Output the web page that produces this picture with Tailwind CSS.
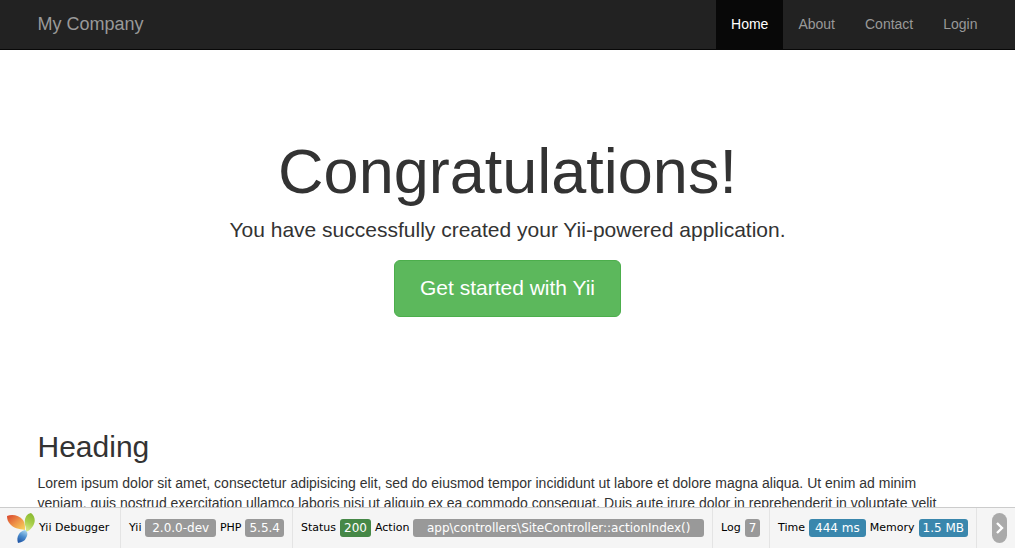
<!DOCTYPE html>
<html lang="en">
<head>
<meta charset="utf-8">
<meta name="viewport" content="width=device-width, initial-scale=1">
<title>My Company</title>
<script src="https://cdn.jsdelivr.net/npm/@tailwindcss/browser@4"></script>
</head>
<body class="bg-white font-['Liberation_Sans',Arial,sans-serif] text-sm leading-5 text-[#333]">
<nav class="border-b border-[#080808] bg-[#222]">
  <div class="mx-auto flex max-w-[970px] items-start justify-between pl-[15px]">
    <a href="#" class="pt-[14px] text-lg leading-5 text-[#999]">My Company</a>
    <ul class="flex leading-5 text-[#999]">
      <li><a href="#" aria-current="page" class="block bg-[#080808] px-[15px] pt-[14px] pb-[15px] text-white">Home</a></li>
      <li><a href="#" class="block px-[15px] pt-[14px] pb-[15px]">About</a></li>
      <li><a href="#" class="block px-[15px] pt-[14px] pb-[15px]">Contact</a></li>
      <li><a href="#" class="block px-[15px] pt-[14px] pb-[15px]">Login</a></li>
    </ul>
  </div>
</nav>
<main class="mx-auto max-w-[970px] px-[15px]">
  <header class="flex flex-col items-center pt-[90px] text-center">
    <h1 class="text-[63px] leading-[63px]">Congratulations!</h1>
    <p class="mt-3 text-[21px] leading-[30px]">You have successfully created your Yii-powered application.</p>
    <a href="#" class="mt-[15px] rounded-md border border-[#4cae4c] bg-[#5cb85c] px-[25px] pt-3 pb-[14px] text-[21px] leading-[29px] text-white">Get started with Yii</a>
  </header>
  <section class="mt-[113px] pr-5">
    <h2 class="text-[30px] leading-[33px]">Heading</h2>
    <p class="mt-[10px]">Lorem ipsum dolor sit amet, consectetur adipisicing elit, sed do eiusmod tempor incididunt ut labore et dolore magna aliqua. Ut enim ad minim veniam, quis nostrud exercitation ullamco laboris nisi ut aliquip ex ea commodo consequat. Duis aute irure dolor in reprehenderit in voluptate velit</p>
  </section>
</main>
<footer class="fixed inset-x-0 bottom-0 flex h-[41px] items-stretch border-t border-[#ccc] bg-[#f5f5f5] font-[Verdana,'DejaVu_Sans',sans-serif] text-[11px] leading-[18px] whitespace-nowrap text-black">
  <a href="#" class="flex min-w-[121px] items-center gap-1 border-r border-[#e4e4e4] pl-[7px]">
    <svg class="h-[30px] w-7" viewBox="0 0 28 30" aria-hidden="true">
      <defs>
        <linearGradient id="o" x1="0" y1="0" x2="1" y2="1"><stop stop-color="#d8432c"/><stop offset=".5" stop-color="#ee9248"/><stop offset="1" stop-color="#f8d85c"/></linearGradient>
        <linearGradient id="g" x1=".6" y1="0" x2=".3" y2="1"><stop stop-color="#8ab92f"/><stop offset=".5" stop-color="#a8cf4b"/><stop offset="1" stop-color="#dceb92"/></linearGradient>
        <linearGradient id="b" x1=".7" y1="0" x2=".3" y2="1"><stop stop-color="#a5d4ee"/><stop offset=".5" stop-color="#4a8bcc"/><stop offset="1" stop-color="#1f55a5"/></linearGradient>
      </defs>
      <path fill="url(#o)" d="M0 3C5 1 12 2 16 7c2 3 2 6 2 10C12 16 6 15 3 11 1 9 0 6 0 3Z"/>
      <path fill="url(#g)" d="M24 0c4 3 5 8 2 13-2 3-4 5-7 6 0-3 0-5-1-7-1-6 1-11 6-12Z"/>
      <path fill="url(#b)" d="M18 17c3 2 3 5 1 8-1 3-4 4-8 5-1-3-1-6 1-9 1-2 3-3 6-4Z"/>
    </svg>
    <span>Yii Debugger</span>
  </a>
  <a href="#" class="flex min-w-[172px] items-center gap-1 border-r border-[#e4e4e4] px-2">
    <span>Yii</span><span class="grow rounded-[3px] bg-[#999] px-1 text-center text-xs leading-[18px] text-white">2.0.0-dev</span>
    <span>PHP</span><span class="rounded-[3px] bg-[#999] px-1 text-xs leading-[18px] text-white">5.5.4</span>
  </a>
  <a href="#" class="flex min-w-[420px] items-center gap-1 border-r border-[#e4e4e4] px-2">
    <span>Status</span><span class="rounded-[3px] bg-[#468847] px-1 text-xs leading-[18px] text-white">200</span>
    <span>Action</span><span class="grow rounded-[3px] bg-[#999] px-1 text-center text-xs leading-[18px] text-white">app\controllers\SiteController::actionIndex()</span>
  </a>
  <a href="#" class="flex min-w-[57px] items-center gap-1 border-r border-[#e4e4e4] px-2">
    <span>Log</span><span class="rounded-[3px] bg-[#999] px-1 text-xs leading-[18px] text-white">7</span>
  </a>
  <a href="#" class="flex min-w-[207px] items-center gap-1 border-r border-[#e4e4e4] px-2">
    <span>Time</span><span class="grow rounded-[3px] bg-[#3a87ad] px-1 text-center text-xs leading-[18px] text-white">444 ms</span>
    <span>Memory</span><span class="rounded-[3px] bg-[#3a87ad] px-1 text-xs leading-[18px] text-white">1.5 MB</span>
  </a>
  <button type="button" aria-label="Hide toolbar" class="mr-2 ml-auto flex h-[30px] w-[15px] shrink-0 items-center justify-center self-center rounded-lg bg-[#aaa] text-white">
    <svg class="h-3 w-2" viewBox="0 0 8 12" fill="none" stroke="currentColor" stroke-width="2.4" aria-hidden="true"><path d="M1 1l5 5-5 5"/></svg>
  </button>
</footer>
</body>
</html>
